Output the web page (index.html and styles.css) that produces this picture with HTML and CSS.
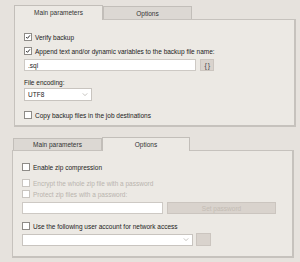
FILE: index.html
```html
<!DOCTYPE html>
<html lang="en">
  <head>
    <meta charset="UTF-8" />
    <link rel="stylesheet" href="styles.css">
    <title>Backup options</title>
  </head>
  <body>
    <div class="section first">
      <div class="tabs">
        <div class="tab active">Main parameters</div>
        <div class="tab">Options</div>
      </div>
      <div class="panel">
        <label class="row r1"><span class="check on"><svg viewBox="0 0 8 8"><polyline points="1.5,4 3.3,5.8 6.6,1.8"/></svg></span>Verify backup</label>
        <label class="row r2"><span class="check on"><svg viewBox="0 0 8 8"><polyline points="1.5,4 3.3,5.8 6.6,1.8"/></svg></span>Append text and/or dynamic variables to the backup file name:</label>
        <div class="line r3">
          <div class="field name">.sql</div>
          <div class="btn vars">{ }</div>
        </div>
        <div class="caption r4">File encoding:</div>
        <div class="select enc r5">
          <span>UTF8</span>
          <svg viewBox="0 0 8 6"><polyline points="1,1.5 4,4.5 7,1.5"/></svg>
        </div>
        <label class="row r6"><span class="check"></span>Copy backup files in the job destinations</label>
      </div>
    </div>

    <div class="section second">
      <div class="tabs">
        <div class="tab">Main parameters</div>
        <div class="tab active">Options</div>
      </div>
      <div class="panel">
        <label class="row s1"><span class="check"></span>Enable zip compression</label>
        <label class="row off s2"><span class="check"></span>Encrypt the whole zip file with a password</label>
        <label class="row off s3"><span class="check"></span>Protect zip files with a password:</label>
        <div class="line s4">
          <div class="field pass"></div>
          <div class="btn setpass">Set password</div>
        </div>
        <label class="row s5"><span class="check"></span>Use the following user account for network access</label>
        <div class="line s6">
          <div class="select account">
            <span></span>
            <svg viewBox="0 0 8 6"><polyline points="1,1.5 4,4.5 7,1.5"/></svg>
          </div>
          <div class="btn dots"></div>
        </div>
      </div>
    </div>
  </body>
</html>
```

FILE: styles.css
```css
* {
    box-sizing: border-box;
}
body {
    margin: 0;
    width: 300px;
    height: 262px;
    background: #e6e2dd;
    font-family: "Liberation Sans", Arial, sans-serif;
    font-size: 6.5px;
    color: #222;
    overflow: hidden;
}

/* onglets */
.section.first {
    padding: 4px 4px 0 14px;
}
.section.second {
    padding: 8px 6px 0 12px;
}
.section.second .tabs {
    padding-left: 1px;
}
.tabs {
    display: flex;
    align-items: flex-end;
    height: 15px;
}
.tab {
    width: 89px;
    height: 12px;
    display: flex;
    align-items: center;
    justify-content: center;
    background: #dcd8d3;
    border: 1px solid #c2beb9;
    border-bottom: none;
    color: #333;
}
.first .tab {
    height: 13px;
}
.tab.active,
.first .tab.active {
    background: #ece9e4;
    position: relative;
    z-index: 1;
    margin-bottom: -1px;
    height: 15px;
    padding-bottom: 1px;
}
.section.second .tab.active {
    width: 88px;
    height: 14px;
}

/* panneau */
.panel {
    background: #ece9e4;
    border: 1px solid #c6c2bd;
    border-right-width: 2px;
    border-bottom-width: 2px;
    display: flex;
    flex-direction: column;
    align-items: flex-start;
    padding: 0 0 0 9px;
    height: 108px;
}

.row {
    display: flex;
    align-items: center;
    height: 10px;
    white-space: nowrap;
}
.row.off {
    color: #b9b4ae;
}
.check {
    width: 8px;
    height: 8px;
    margin-right: 3px;
    background: #fff;
    border: 1px solid #8e8b87;
    display: inline-flex;
}
.row.off .check {
    border-color: #c9c5c0;
}
.check svg {
    width: 6px;
    height: 6px;
    fill: none;
    stroke: #2a2a2a;
    stroke-width: 1.3;
}

.line {
    display: flex;
    align-items: center;
}
.field {
    height: 12px;
    background: #fff;
    border: 1px solid #cdc9c4;
    padding-left: 3px;
    display: flex;
    align-items: center;
}
.btn {
    background: #d9d3cd;
    border: 1px solid #cbc5bf;
    display: flex;
    align-items: center;
    justify-content: center;
}
.select {
    background: #fff;
    border: 1px solid #c8c4bf;
    display: flex;
    align-items: center;
    justify-content: space-between;
    padding: 0 3px 0 3px;
}
.select svg {
    width: 6px;
    height: 5px;
    fill: none;
    stroke: #b3afaa;
    stroke-width: 1;
}

/* rangées du premier panneau */
.r1 { margin-top: 12px; }
.r2 { margin-top: 4px; }
.r3 { margin-top: 3px; }
.name { width: 172px; }
.vars {
    width: 14px;
    height: 12px;
    margin-left: 4px;
    color: #444;
    font-size: 7px;
    letter-spacing: -0.5px;
}
.r4 { margin-top: 8px; height: 8px; line-height: 8px; }
.r5 { margin-top: 1px; }
.enc {
    width: 68px;
    height: 13px;
}
.r6 { margin-top: 9px; }

/* rangées du second panneau */
.s1 { margin-top: 11px; }
.s2 { margin-top: 6px; }
.s3 { margin-top: 1px; }
.s4 { margin-top: 3px; }
.pass { width: 141px; }
.setpass {
    width: 109px;
    height: 12px;
    margin-left: 4px;
    color: #c4bcb4;
}
.s5 { margin-top: 7px; }
.s6 { margin-top: 2px; }
.account {
    width: 171px;
    height: 12px;
}
.dots {
    width: 15px;
    height: 13px;
    margin-left: 3px;
}
```
